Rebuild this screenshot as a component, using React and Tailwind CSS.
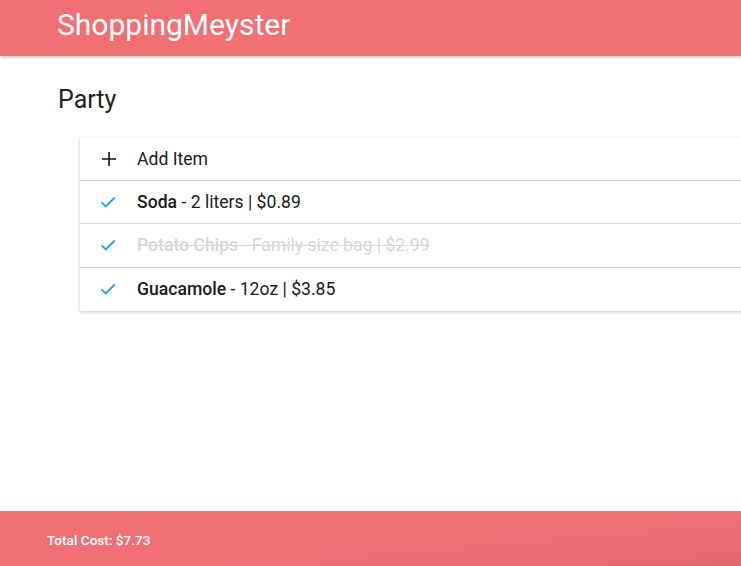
import React from "react";

const Check = () => (
  <svg width="18" height="18" viewBox="0 0 24 24" fill="none" stroke="#1ea1f1" strokeWidth="2.4">
    <path d="M3.5 12.5l5.5 5.5L21 6" />
  </svg>
);

const Plus = () => (
  <svg width="16" height="16" viewBox="0 0 16 16" fill="none" stroke="#111" strokeWidth="1.6">
    <path d="M8 1v14M1 8h14" />
  </svg>
);

export default function App() {
  const items = [
    { name: "Soda", desc: "2 liters | $0.89", done: false },
    { name: "Potato Chips", desc: "Family size bag | $2.99", done: true },
    { name: "Guacamole", desc: "12oz | $3.85", done: false },
  ];
  return (
    <div className="w-[741px] h-[566px] flex flex-col bg-white overflow-hidden" style={{ fontFamily: "Roboto, 'Noto Sans', sans-serif" }}>
      <header className="h-[56px] shrink-0 bg-[#f07074] flex items-center pl-[57px] shadow-[0_1px_3px_rgba(0,0,0,0.3)] z-10">
        <h1 className="text-white text-[30px] leading-none pb-[6px]">ShoppingMeyster</h1>
      </header>
      <main className="flex-1 pl-[58px]">
        <h2 className="text-[25px] text-[#222] mt-[31px] leading-none">Party</h2>
        <div className="ml-[22px] mt-[26px] bg-white shadow-[0_1px_3px_rgba(0,0,0,0.25)] w-[700px]">
          <div className="h-[43px] flex items-center border-b border-[#d8d8d8]">
            <div className="w-[57px] pl-[21px] flex items-center"><Plus /></div>
            <span className="text-[17.6px] text-[#1a1a1a]">Add Item</span>
          </div>
          {items.map((it, i) => (
            <div key={i} className={"h-[43.3px] flex items-center " + (i < items.length - 1 ? "border-b border-[#d8d8d8]" : "")}>
              <div className="w-[57px] pl-[19px] flex items-center"><Check /></div>
              <span className={"text-[17.6px] " + (it.done ? "text-[#d6d6d6] line-through" : "text-[#1a1a1a]")}>
                <span className="font-medium">{it.name}</span> - {it.desc}
              </span>
            </div>
          ))}
        </div>
      </main>
      <footer className="h-[55px] shrink-0 bg-[linear-gradient(175deg,#f07074_60%,#e2686c)] flex items-center pl-[47px] pt-[3px]">
        <span className="text-white text-[13.6px] font-medium">Total Cost: $7.73</span>
      </footer>
    </div>
  );
}
